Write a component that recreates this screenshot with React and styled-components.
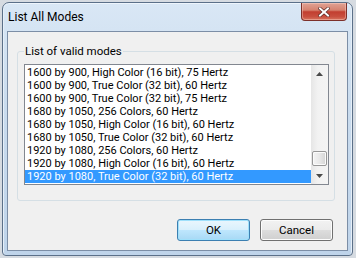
import React from 'react';
import styled, { createGlobalStyle } from 'styled-components';

const Global = createGlobalStyle`
  html, body { margin: 0; padding: 0; }
  body {
    width: 356px;
    height: 258px;
    overflow: hidden;
    background: #d6dbe1;
    font-family: Roboto, "Open Sans", sans-serif;
  }
`;

const Window = styled.div`
  margin: 2px 0 0 2px;
  width: 351px;
  height: 254px;
  box-sizing: border-box;
  border: 1px solid #5b7089;
  border-radius: 7px 7px 4px 4px;
  background: linear-gradient(180deg, #d9e7f5 0%, #cadcee 40%, #bfd4ea 100%);
  box-shadow: inset 0 1px 0 #eef5fc, inset 1px 0 0 #e6eff8, inset -1px 0 0 #e6eff8;
  display: flex;
  flex-direction: column;
  padding: 0 4px 4px 4px;
`;

const TitleBar = styled.div`
  height: 28px;
  flex: none;
  display: flex;
  align-items: flex-start;
  justify-content: space-between;
`;

const Title = styled.div`
  margin: 6px 0 0 1px;
  font-size: 12px;
  line-height: 17px;
  color: #000;
`;

const CloseButton = styled.div`
  width: 46px;
  height: 18px;
  margin-right: 1px;
  box-sizing: border-box;
  border: 1px solid #7c302a;
  border-top: none;
  border-radius: 0 0 4px 4px;
  background: linear-gradient(180deg, #e0a294 0%, #d6826f 42%, #c23e30 52%, #c84f3f 80%, #d7745f 100%);
  box-shadow: inset 0 0 0 1px rgba(255, 220, 210, 0.4);
  display: flex;
  align-items: center;
  justify-content: center;
`;

const Client = styled.div`
  flex: 1;
  box-sizing: border-box;
  border: 1px solid #7c8ea6;
  background: #f0f0f0;
  display: flex;
  flex-direction: column;
  padding: 12px 0 0 9px;
`;

const Group = styled.fieldset`
  margin: 0;
  width: 318px;
  box-sizing: border-box;
  border: 1px solid #d5dfe5;
  border-radius: 3px;
  padding: 5px 5px 15px 6px;
  min-width: 0;
`;

const Legend = styled.legend`
  padding: 0 1px;
  margin-left: 0;
  font-size: 11.5px;
  line-height: 15px;
  color: #000;
`;

const ListBox = styled.div`
  height: 121px;
  box-sizing: border-box;
  border: 1px solid #828790;
  background: #fff;
  display: flex;
`;

const Rows = styled.div`
  flex: 1;
  padding-top: 1px;
  overflow: hidden;
`;

const Row = styled.div`
  height: 13px;
  line-height: 13px;
  padding-left: 2px;
  font-size: 11px;
  white-space: nowrap;
  color: ${p => (p.$selected ? '#fff' : '#000')};
  background: ${p => (p.$selected ? '#3399ff' : 'transparent')};
`;

const ScrollBar = styled.div`
  width: 17px;
  flex: none;
  display: flex;
  flex-direction: column;
  background: linear-gradient(90deg, #e6e6e6 0%, #f2f2f2 40%, #f4f4f4 100%);
`;

const Arrow = styled.div`
  height: 17px;
  flex: none;
  display: flex;
  align-items: center;
  justify-content: center;
`;

const Track = styled.div`
  flex: 1;
  display: flex;
  flex-direction: column;
  justify-content: flex-end;
  padding: 0 1px 1px 1px;
`;

const Thumb = styled.div`
  height: 15px;
  box-sizing: border-box;
  border: 1px solid #979797;
  border-radius: 2px;
  background: linear-gradient(90deg, #f4f4f4 0%, #e8e8e8 50%, #d4d4d4 100%);
  box-shadow: inset 0 0 0 1px #fbfbfb;
`;

const Buttons = styled.div`
  margin-top: auto;
  display: flex;
  justify-content: flex-end;
  gap: 10px;
  padding: 0 14px 9px 0;
`;

const Button = styled.button`
  width: 73px;
  height: 22px;
  box-sizing: border-box;
  border-radius: 3px;
  font-family: Roboto, "Open Sans", sans-serif;
  font-size: 11.5px;
  color: #000;
  padding: 0;
  border: 1px solid ${p => (p.$default ? '#3c7fb1' : '#707070')};
  background: ${p =>
    p.$default
      ? 'linear-gradient(180deg, #eaf6fd 0%, #d9f0fc 48%, #bee6fd 52%, #a7d9f5 100%)'
      : 'linear-gradient(180deg, #f2f2f2 0%, #ebebeb 48%, #dddddd 52%, #cfcfcf 100%)'};
  box-shadow: inset 0 0 0 1px ${p => (p.$default ? '#9fe0fb' : '#fcfcfc')};
`;

const modes = [
  '1600 by 900, High Color (16 bit), 75 Hertz',
  '1600 by 900, True Color (32 bit), 60 Hertz',
  '1600 by 900, True Color (32 bit), 75 Hertz',
  '1680 by 1050, 256 Colors, 60 Hertz',
  '1680 by 1050, High Color (16 bit), 60 Hertz',
  '1680 by 1050, True Color (32 bit), 60 Hertz',
  '1920 by 1080, 256 Colors, 60 Hertz',
  '1920 by 1080, High Color (16 bit), 60 Hertz',
  '1920 by 1080, True Color (32 bit), 60 Hertz',
];

export default function App() {
  return (
    <>
      <Global />
      <Window>
        <TitleBar>
          <Title>List All Modes</Title>
          <CloseButton>
            <svg width="12" height="10" viewBox="0 0 12 10">
              <path d="M2 1.5 L10 8.5 M10 1.5 L2 8.5" stroke="#5a2a26" strokeWidth="3.4" strokeLinecap="square" />
              <path d="M2 1.5 L10 8.5 M10 1.5 L2 8.5" stroke="#fff" strokeWidth="2" strokeLinecap="square" />
            </svg>
          </CloseButton>
        </TitleBar>
        <Client>
          <Group>
            <Legend>List of valid modes</Legend>
            <ListBox>
              <Rows>
                {modes.map((m, i) => (
                  <Row key={m} $selected={i === modes.length - 1}>{m}</Row>
                ))}
              </Rows>
              <ScrollBar>
                <Arrow>
                  <svg width="7" height="4" viewBox="0 0 7 4"><path d="M0 4 L3.5 0 L7 4 Z" fill="#4a4a4a" /></svg>
                </Arrow>
                <Track>
                  <Thumb />
                </Track>
                <Arrow>
                  <svg width="7" height="4" viewBox="0 0 7 4"><path d="M0 0 L7 0 L3.5 4 Z" fill="#4a4a4a" /></svg>
                </Arrow>
              </ScrollBar>
            </ListBox>
          </Group>
          <Buttons>
            <Button $default>OK</Button>
            <Button>Cancel</Button>
          </Buttons>
        </Client>
      </Window>
    </>
  );
}
